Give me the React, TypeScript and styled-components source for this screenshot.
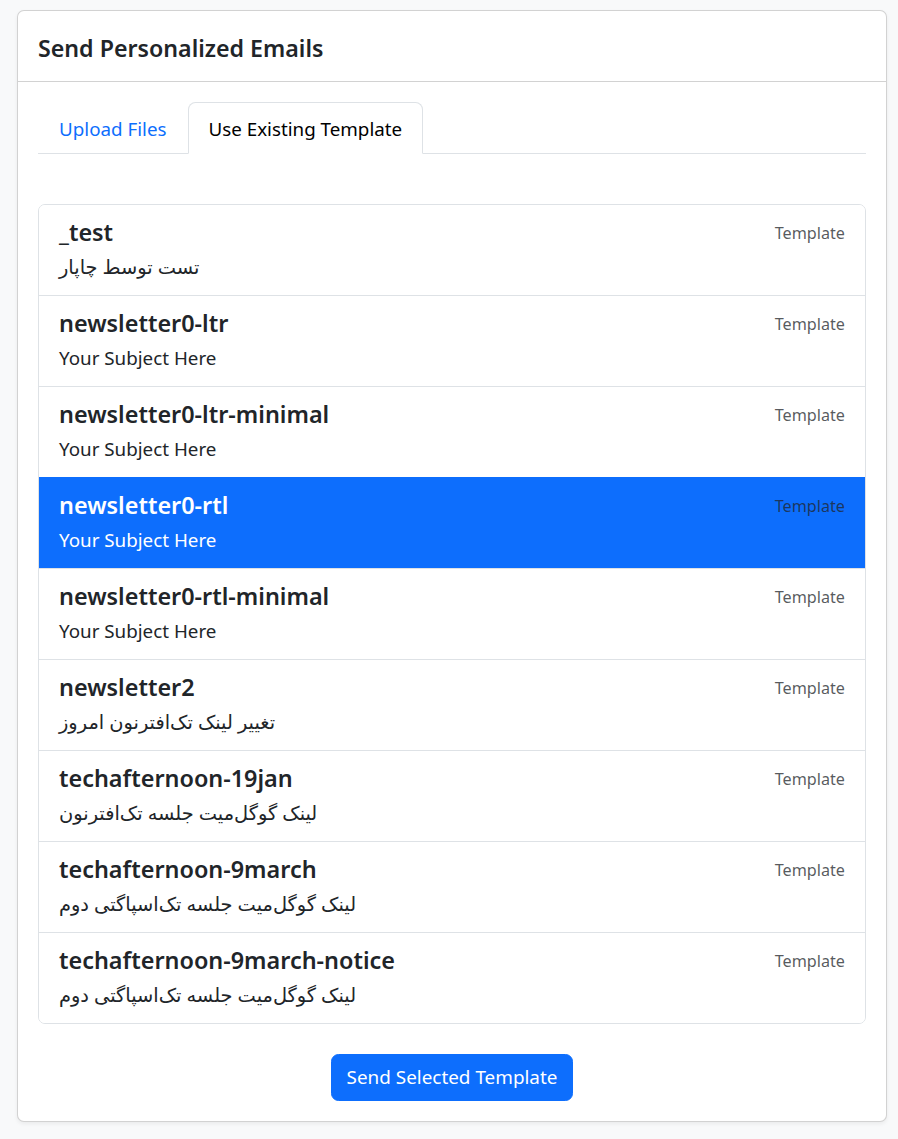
import React, { useState } from "react";
import styled, { createGlobalStyle } from "styled-components";

const Global = createGlobalStyle`
  html, body { margin: 0; padding: 0; background: #f8f9fa; }
  body {
    font-family: "Noto Sans", "DejaVu Sans", sans-serif;
    color: #212529;
    -webkit-font-smoothing: antialiased;
  }
  * { box-sizing: border-box; }
`;

const Page = styled.div`
  padding: 10px 11px 18px 17px;
`;

const Card = styled.div`
  background: #fff;
  border: 1px solid rgba(0, 0, 0, 0.175);
  border-radius: 7px;
  box-shadow: 0 2px 4px rgba(0, 0, 0, 0.06);
  overflow: hidden;
`;

const CardHeader = styled.div`
  padding: 22px 20px 18px;
  border-bottom: 1px solid rgba(0, 0, 0, 0.175);
`;

const Title = styled.h5`
  margin: 0;
  font-size: 23.2px;
  line-height: 30px;
  font-weight: 600;
  color: #212529;
`;

const CardBody = styled.div`
  padding: 20px 20px 20px;
`;

const Tabs = styled.ul`
  list-style: none;
  margin: 0;
  padding: 0;
  display: flex;
  border-bottom: 1px solid #dee2e6;
`;

const Tab = styled.li<{ $active?: boolean }>`
  margin-bottom: -1px;
  padding: 11px 20px 8px;
  font-size: 18.8px;
  line-height: 31px;
  border: 1px solid transparent;
  border-color: ${(p) => (p.$active ? "#dee2e6 #dee2e6 #fff" : "transparent")};
  border-top-left-radius: 7.5px;
  border-top-right-radius: 7.5px;
  background: ${(p) => (p.$active ? "#fff" : "transparent")};
  color: ${(p) => (p.$active ? "#000" : "#0d6efd")};
  cursor: pointer;
`;

const List = styled.div`
  margin-top: 50px;
  border: 1px solid #dee2e6;
  border-radius: 7px;
  overflow: hidden;
`;

const Item = styled.div<{ $active?: boolean }>`
  padding: 12px 20px 8px;
  background: ${(p) => (p.$active ? "#0d6efd" : "#fff")};
  color: ${(p) => (p.$active ? "#fff" : "#212529")};
  border-top: 1px solid ${(p) => (p.$active ? "#0d6efd" : "#dee2e6")};
  &:first-child {
    border-top: none;
  }
  cursor: pointer;
`;

const ItemTop = styled.div`
  display: flex;
  justify-content: space-between;
  align-items: flex-start;
  margin-bottom: 5px;
`;

const ItemName = styled.h5`
  margin: 0;
  font-size: 23.4px;
  line-height: 30px;
  font-weight: 600;
`;

const Badge = styled.small`
  font-size: 16.2px;
  line-height: 26px;
  color: rgba(33, 37, 41, 0.75);
  padding-top: 3px;
`;

const Subject = styled.p<{ $rtl?: boolean }>`
  margin: 0 0 5px;
  font-size: ${(p) => (p.$rtl ? "19.4px" : "18.8px")};
  line-height: 30px;
`;

const Footer = styled.div`
  display: flex;
  justify-content: center;
  margin-top: 30px;
`;

const Button = styled.button`
  font-family: inherit;
  font-size: 18.9px;
  line-height: 30px;
  padding: 7px 15px 8px;
  color: #fff;
  background: #0d6efd;
  border: 1px solid #0d6efd;
  border-radius: 7.5px;
  cursor: pointer;
`;

const templates = [
  { name: "_test", subject: "تست توسط چاپار", rtl: true },
  { name: "newsletter0-ltr", subject: "Your Subject Here" },
  { name: "newsletter0-ltr-minimal", subject: "Your Subject Here" },
  { name: "newsletter0-rtl", subject: "Your Subject Here" },
  { name: "newsletter0-rtl-minimal", subject: "Your Subject Here" },
  { name: "newsletter2", subject: "تغییر لینک تک\u200cافترنون امروز", rtl: true },
  { name: "techafternoon-19jan", subject: "لینک گوگل\u200cمیت جلسه تک\u200cافترنون", rtl: true },
  { name: "techafternoon-9march", subject: "لینک گوگل\u200cمیت جلسه تک\u200cاسپاگتی دوم", rtl: true },
  { name: "techafternoon-9march-notice", subject: "لینک گوگل\u200cمیت جلسه تک\u200cاسپاگتی دوم", rtl: true },
];

export default function App() {
  const [selected, setSelected] = useState(3);
  return (
    <Page>
      <Global />
      <Card>
        <CardHeader>
          <Title>Send Personalized Emails</Title>
        </CardHeader>
        <CardBody>
          <Tabs>
            <Tab>Upload Files</Tab>
            <Tab $active>Use Existing Template</Tab>
          </Tabs>
          <List>
            {templates.map((t, i) => (
              <Item key={t.name} $active={i === selected} onClick={() => setSelected(i)}>
                <ItemTop>
                  <ItemName>{t.name}</ItemName>
                  <Badge>Template</Badge>
                </ItemTop>
                <Subject $rtl={t.rtl}>{t.subject}</Subject>
              </Item>
            ))}
          </List>
          <Footer>
            <Button>Send Selected Template</Button>
          </Footer>
        </CardBody>
      </Card>
    </Page>
  );
}
